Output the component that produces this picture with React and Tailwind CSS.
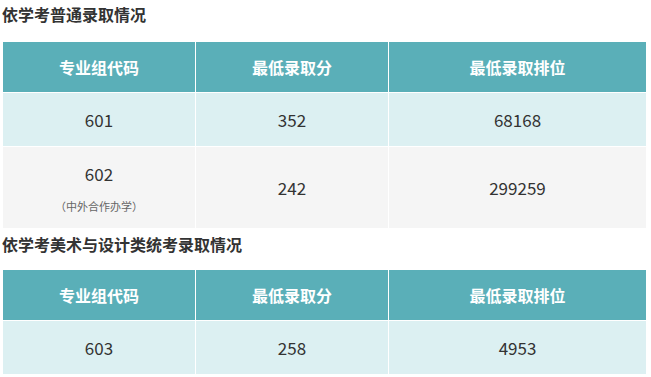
import React from 'react';

// 录取情况表格
const headers = ['专业组代码', '最低录取分', '最低录取排位'];

const Cell = ({ children, className = '' }) => (
  <div className={`flex flex-col items-center justify-center ${className}`}>{children}</div>
);

const ScoreTable = ({ rows }) => (
  <div className="ml-[3px] w-[643px] grid grid-cols-[192px_192px_257px] gap-px bg-white">
    {headers.map((h) => (
      <Cell key={h} className="h-[50px] bg-[#5aafb8] text-white font-bold text-[16px]">
        {h}
      </Cell>
    ))}
    {rows.map((row, i) =>
      row.cells.map((c, j) => (
        <Cell
          key={`${i}-${j}`}
          className={`${row.h} ${i % 2 === 0 ? 'bg-[#dcf0f2]' : 'bg-[#f5f5f5]'} text-[#333] text-[17px]`}
        >
          <span className="leading-[24px]">{c}</span>
          {j === 0 && row.note && (
            <span className="mt-[13px] text-[11px] leading-[14px] text-[#666]">{row.note}</span>
          )}
        </Cell>
      ))
    )}
  </div>
);

export default function App() {
  return (
    <div className="w-[651px] h-[377px] bg-white overflow-hidden font-['Noto_Sans_CJK_SC','Noto_Sans',sans-serif]">
      <h2 className="pt-[2px] pl-[2px] text-[16px] leading-[24px] font-bold text-[#333]">依学考普通录取情况</h2>
      <div className="mt-[16px]">
        <ScoreTable
          rows={[
            { cells: ['601', '352', '68168'], h: 'h-[53px]' },
            { cells: ['602', '242', '299259'], h: 'h-[81px]', note: '（中外合作办学）' },
          ]}
        />
      </div>
      <h2 className="mt-[4px] pl-[2px] text-[16px] leading-[24px] font-bold text-[#333]">依学考美术与设计类统考录取情况</h2>
      <div className="mt-[14px]">
        <ScoreTable rows={[{ cells: ['603', '258', '4953'], h: 'h-[53px]' }]} />
      </div>
    </div>
  );
}
